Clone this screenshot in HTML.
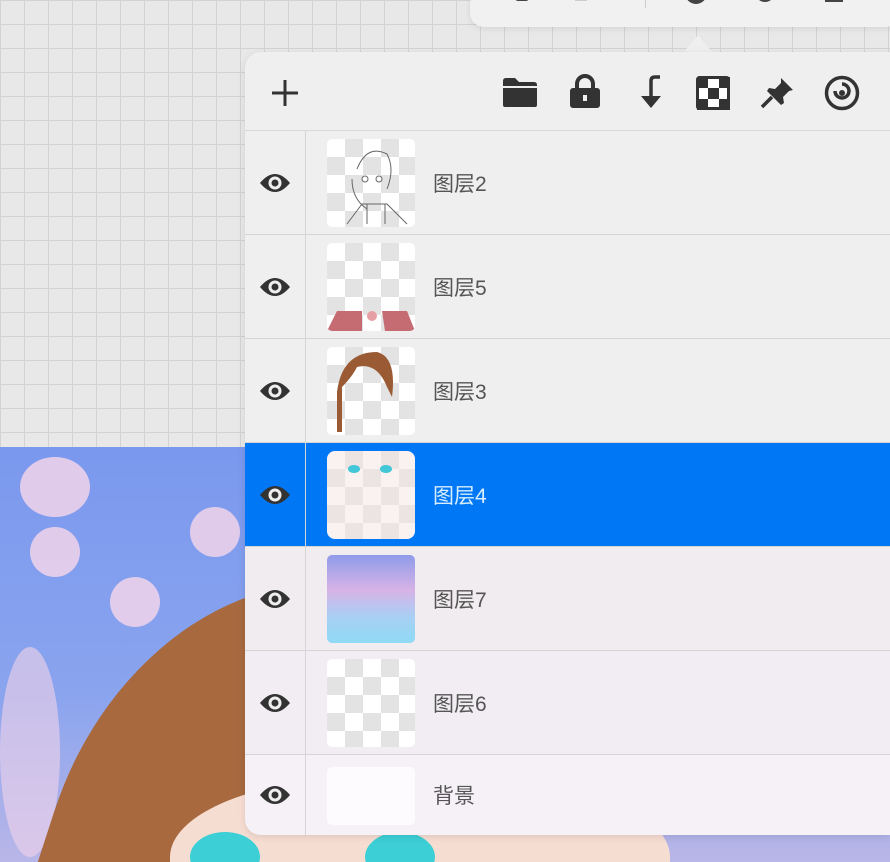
<!DOCTYPE html>
<html><head><meta charset="utf-8"><style>
*{margin:0;padding:0;box-sizing:border-box}
html{width:890px;height:862px;overflow:hidden}
body{width:890px;height:862px;overflow:hidden;position:relative;background:#e6e6e6;font-family:"Liberation Sans","Noto Sans CJK SC",sans-serif}
.grid{position:absolute;left:0;top:0;width:890px;height:447px;background-color:#e8e8e8;background-image:linear-gradient(#d2d2d2 1px,transparent 1px),linear-gradient(90deg,#d2d2d2 1px,transparent 1px);background-size:24px 24px}
.art{position:absolute;left:0;top:447px;width:890px;height:415px;background:linear-gradient(180deg,#7a98ee,#8aa4ee 60%,#b9b6e8);overflow:hidden}
.bl{position:absolute;border-radius:50%;background:#f2d4ea;opacity:.85}
.hair{position:absolute;left:60px;top:120px;width:420px;height:520px;background:#a8693f;border-radius:60% 40% 0 0;transform:rotate(18deg)}
.face{position:absolute;left:170px;top:330px;width:500px;height:200px;background:#f6ddd2;border-radius:40% 40% 0 0}
.eye{position:absolute;top:385px;width:70px;height:50px;border-radius:50%;background:#3ccfd6}
.top{position:absolute;left:470px;top:-10px;width:430px;height:37px;background:#f1f1f1;border-radius:14px;box-shadow:0 2px 6px rgba(0,0,0,.08);overflow:hidden}
.arrow{position:absolute;left:684px;top:35px;width:0;height:0;border-left:14px solid transparent;border-right:14px solid transparent;border-bottom:17px solid #efefef}
.panel{position:absolute;left:245px;top:52px;width:645px;height:783px;background:#efefef;border-radius:16px 0 0 16px;overflow:hidden;box-shadow:0 2px 8px rgba(0,0,0,.1)}
.tb{height:79px;border-bottom:1px solid #d8d8d8;position:relative}
.row{position:absolute;left:0;width:645px;height:104px;border-bottom:1px solid #d5d5d5}
.eyei{position:absolute;left:14px;top:50%;margin-top:-14px}
.div{position:absolute;left:60px;top:0;bottom:0;width:1px;background:#d5d5d5}
.th{position:absolute;left:82px;top:8px;width:88px;height:88px;border-radius:5px;background-color:#fff;background-image:linear-gradient(45deg,#e3e3e3 25%,transparent 25%,transparent 75%,#e3e3e3 75%),linear-gradient(45deg,#e3e3e3 25%,transparent 25%,transparent 75%,#e3e3e3 75%);background-size:36px 36px;background-position:0 0,18px 18px;overflow:hidden}
.lb{position:absolute;left:188px;top:50%;margin-top:-15px;font-size:21px;color:#555}
.sel{background:#0077f5}
.sel .lb{color:#d8eeff}
</style></head><body>
<div class="grid"></div>
<div class="art">
<div class="bl" style="left:20px;top:10px;width:70px;height:60px"></div>
<div class="bl" style="left:110px;top:130px;width:50px;height:50px"></div>
<div class="bl" style="left:190px;top:60px;width:50px;height:50px"></div>
<div class="bl" style="left:0;top:200px;width:60px;height:210px;opacity:.6"></div>
<div class="bl" style="left:30px;top:80px;width:50px;height:50px"></div>
<div class="hair"></div>
<div class="face"></div>
<div class="eye" style="left:190px"></div>
<div class="eye" style="left:365px"></div>
</div>
<div class="top">
<div style="position:absolute;left:45px;top:0;width:14px;height:11px;background:#444;border-radius:0 0 3px 3px"></div>
<div style="position:absolute;left:105px;top:0;width:12px;height:11px;background:#ccc"></div>
<div style="position:absolute;left:175px;top:0;width:1px;height:18px;background:#ccc"></div>
<div style="position:absolute;left:215px;top:0;width:22px;height:14px;background:#444;border-radius:0 0 11px 11px"></div>
<div style="position:absolute;left:285px;top:0;width:20px;height:12px;background:#444;border-radius:0 0 10px 10px"></div>
<div style="position:absolute;left:355px;top:0;width:18px;height:12px;border:3px solid #444;border-top:none"></div>
</div>
<div class="arrow"></div>
<div class="panel">
<div class="tb">
<svg style="position:absolute;left:24px;top:25px" width="32" height="32" viewBox="0 0 32 32"><path d="M16 3v26M3 16h26" stroke="#333" stroke-width="3"/></svg>
<svg style="position:absolute;left:256px;top:23px" width="38" height="34" viewBox="0 0 38 34"><path d="M2 6q0-3 3-3h9l4 4h15q3 0 3 3v20q0 2-2 2H4q-2 0-2-2z" fill="#333"/><path d="M2 12h34" stroke="#efefef" stroke-width="2"/></svg>
<svg style="position:absolute;left:323px;top:21px" width="34" height="36" viewBox="0 0 34 36"><path d="M9 16v-5a8 8 0 0 1 16 0v5" stroke="#333" stroke-width="4" fill="none"/><rect x="2" y="15" width="30" height="20" rx="3" fill="#333"/><rect x="15" y="22" width="4" height="6" fill="#efefef"/></svg>
<svg style="position:absolute;left:391px;top:22px" width="30" height="36" viewBox="0 0 30 36"><path d="M24 3h-5q-4 0-4 4v20" stroke="#333" stroke-width="3.5" fill="none"/><path d="M5 22l10 12 10-12z" fill="#333"/></svg>
<svg style="position:absolute;left:451px;top:24px" width="34" height="34" viewBox="0 0 34 34"><rect x="1.5" y="1.5" width="31" height="31" rx="2" fill="#fff" stroke="#333" stroke-width="3"/><path d="M1 1h11v11H1zM23 1h11v11H23zM12 12h11v11H12zM1 23h11v11H1zM23 23h11v11H23z" fill="#333"/></svg>
<svg style="position:absolute;left:514px;top:24px" width="36" height="34" viewBox="0 0 36 34"><path d="M22 2l12 12-4 1-6 6 1 6-3 2-14-14 2-3 6 1 6-6z" fill="#333"/><path d="M13 21L3 31" stroke="#333" stroke-width="3.5"/></svg>
<svg style="position:absolute;left:578px;top:22px" width="38" height="38" viewBox="0 0 38 38"><circle cx="19" cy="19" r="15.5" fill="none" stroke="#333" stroke-width="3.5"/><path d="M12 17a7 7 0 1 0 7-7" fill="none" stroke="#333" stroke-width="3.5"/><circle cx="19" cy="19" r="3" fill="#333"/></svg>
</div>
<div class="row" style="top:79px"><svg class="eyei" width="32" height="28" viewBox="0 0 32 28"><path d="M1 14Q16-4 31 14Q16 32 1 14z" fill="#333"/><circle cx="16" cy="14" r="6.5" fill="#efefef"/><circle cx="16" cy="14" r="3.5" fill="#333"/></svg><div class="div"></div><div class="th"><svg width="88" height="88"><g fill="none" stroke="#666" stroke-width="1"><path d="M30 30q10-25 30-15q8 15 0 35M25 40q0 20 15 30M20 85l15-20h25l20 20M40 65v20M58 65v20"/><circle cx="38" cy="40" r="3"/><circle cx="52" cy="40" r="3"/></g></svg></div><div class="lb">图层2</div></div>
<div class="row" style="top:183px"><svg class="eyei" width="32" height="28" viewBox="0 0 32 28"><path d="M1 14Q16-4 31 14Q16 32 1 14z" fill="#333"/><circle cx="16" cy="14" r="6.5" fill="#efefef"/><circle cx="16" cy="14" r="3.5" fill="#333"/></svg><div class="div"></div><div class="th"><svg width="88" height="88"><path d="M0 88l10-20h25v20z" fill="#c56b72"/><path d="M55 68h25l8 20H58z" fill="#c56b72"/><circle cx="45" cy="73" r="5" fill="#e6a0a5"/></svg></div><div class="lb">图层5</div></div>
<div class="row" style="top:287px"><svg class="eyei" width="32" height="28" viewBox="0 0 32 28"><path d="M1 14Q16-4 31 14Q16 32 1 14z" fill="#333"/><circle cx="16" cy="14" r="6.5" fill="#efefef"/><circle cx="16" cy="14" r="3.5" fill="#333"/></svg><div class="div"></div><div class="th"><svg width="88" height="88"><path d="M10 45q5-40 40-40q20 5 15 45l-5-10q-10-25-30-20q-5 10-15 20v45h-5z" fill="#9a5a34"/></svg></div><div class="lb">图层3</div></div>
<div class="row sel" style="top:391px"><svg class="eyei" width="32" height="28" viewBox="0 0 32 28"><path d="M1 14Q16-4 31 14Q16 32 1 14z" fill="#333"/><circle cx="16" cy="14" r="6.5" fill="#efefef"/><circle cx="16" cy="14" r="3.5" fill="#333"/></svg><div class="div" style="background:#d5d5d5"></div><div class="th" style="border-radius:8px"><svg width="88" height="88"><rect width="88" height="88" fill="#f4e6e2" opacity=".5"/><ellipse cx="27" cy="18" rx="6" ry="4" fill="#42c7d8"/><ellipse cx="59" cy="18" rx="6" ry="4" fill="#42c7d8"/></svg></div><div class="lb">图层4</div></div>
<div class="row" style="top:495px;background:#f1ecef"><svg class="eyei" width="32" height="28" viewBox="0 0 32 28"><path d="M1 14Q16-4 31 14Q16 32 1 14z" fill="#333"/><circle cx="16" cy="14" r="6.5" fill="#efefef"/><circle cx="16" cy="14" r="3.5" fill="#333"/></svg><div class="div"></div><div class="th" style="background:linear-gradient(180deg,#8f9bea,#d7b3e6 40%,#a9cff4 70%,#8fdaf5)"></div><div class="lb">图层7</div></div>
<div class="row" style="top:599px;background:#f1edf2"><svg class="eyei" width="32" height="28" viewBox="0 0 32 28"><path d="M1 14Q16-4 31 14Q16 32 1 14z" fill="#333"/><circle cx="16" cy="14" r="6.5" fill="#efefef"/><circle cx="16" cy="14" r="3.5" fill="#333"/></svg><div class="div"></div><div class="th"></div><div class="lb">图层6</div></div>
<div class="row" style="top:703px;height:80px;background:#f5f1f7;border:none"><svg class="eyei" width="32" height="28" viewBox="0 0 32 28"><path d="M1 14Q16-4 31 14Q16 32 1 14z" fill="#333"/><circle cx="16" cy="14" r="6.5" fill="#efefef"/><circle cx="16" cy="14" r="3.5" fill="#333"/></svg><div class="div"></div><div class="th" style="top:12px;height:58px;background:#fdfbfd"></div><div class="lb">背景</div></div>
</div>
</body></html>
